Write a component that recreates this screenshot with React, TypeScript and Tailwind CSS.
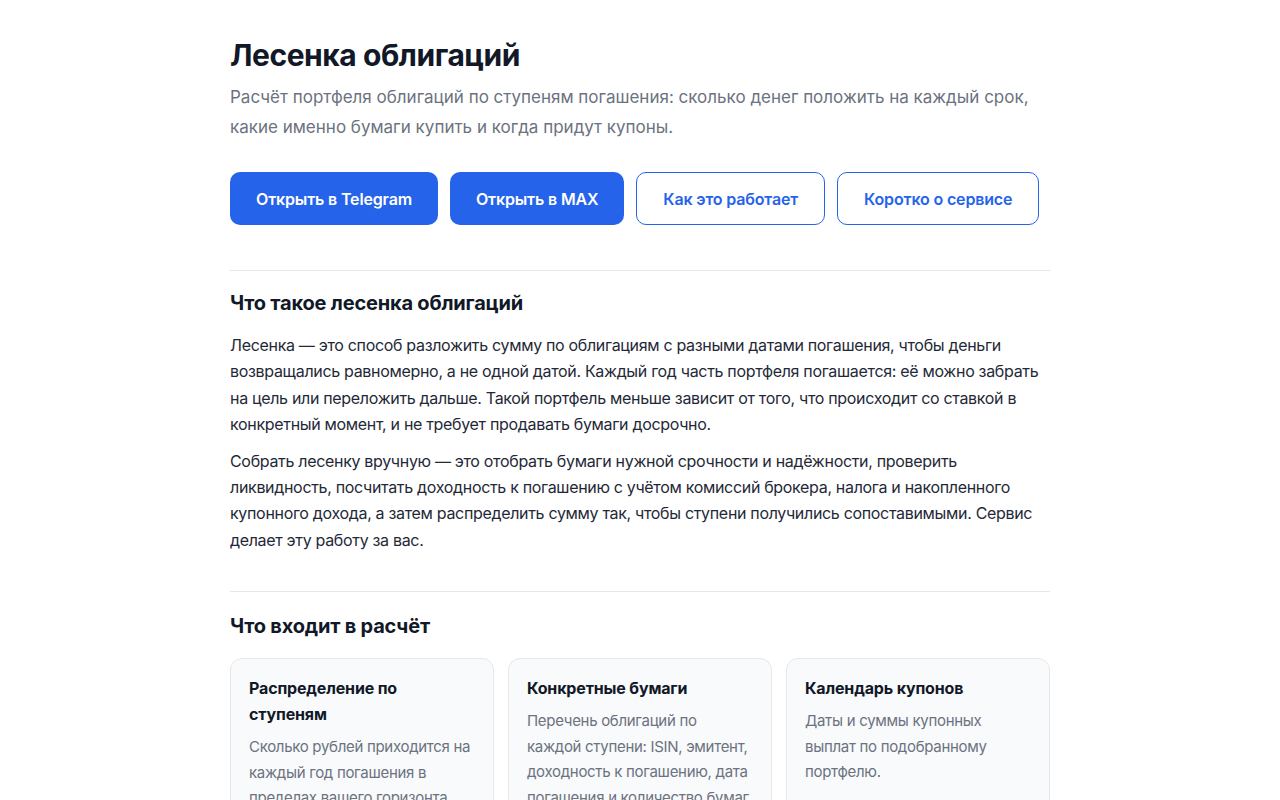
const cards = [
  {
    title: "Распределение по ступеням",
    text: "Сколько рублей приходится на каждый год погашения в пределах вашего горизонта.",
  },
  {
    title: "Конкретные бумаги",
    text: "Перечень облигаций по каждой ступени: ISIN, эмитент, доходность к погашению, дата погашения и количество бумаг.",
  },
  {
    title: "Календарь купонов",
    text: "Даты и суммы купонных выплат по подобранному портфелю.",
  },
];

export default function App() {
  return (
    <div className="min-h-screen bg-white font-['Inter','Noto_Sans',sans-serif] text-[#1f2937]">
      <main className="mx-auto w-[820px] pt-[37px] pb-16">
        <h1 className="text-[30px] font-bold leading-[36px] tracking-[-0.015em] text-[#111827]">
          Лесенка облигаций
        </h1>
        <p className="mt-[9px] text-[17px] leading-[30px] text-[#6b7280]">
          Расчёт портфеля облигаций по ступеням погашения: сколько денег положить на каждый срок,
          какие именно бумаги купить и когда придут купоны.
        </p>

        <div className="mt-[30px] flex gap-3">
          <a className="flex h-[53px] items-center rounded-[10px] bg-[#2563eb] px-[26px] text-[16px] font-semibold tracking-[-0.01em] text-white">
            Открыть в Telegram
          </a>
          <a className="flex h-[53px] items-center rounded-[10px] bg-[#2563eb] px-[26px] text-[16px] font-semibold tracking-[-0.01em] text-white">
            Открыть в MAX
          </a>
          <a className="flex h-[53px] items-center rounded-[10px] border border-[#2563eb] bg-white px-[26px] text-[16px] font-semibold tracking-[-0.01em] text-[#2563eb]">
            Как это работает
          </a>
          <a className="flex h-[53px] items-center rounded-[10px] border border-[#2563eb] bg-white px-[26px] text-[16px] font-semibold tracking-[-0.01em] text-[#2563eb]">
            Коротко о сервисе
          </a>
        </div>

        <hr className="mt-[45px] border-t border-[#e5e7eb]" />

        <section>
          <h2 className="mt-[18px] text-[20px] font-bold leading-[28px] tracking-[-0.01em] text-[#111827]">
            Что такое лесенка облигаций
          </h2>
          <p className="mt-[15px] text-[16px] leading-[26.4px] tracking-[-0.02em]">
            Лесенка — это способ разложить сумму по облигациям с разными датами погашения, чтобы деньги
            возвращались равномерно, а не одной датой. Каждый год часть портфеля погашается: её можно забрать
            на цель или переложить дальше. Такой портфель меньше зависит от того, что происходит со ставкой в
            конкретный момент, и не требует продавать бумаги досрочно.
          </p>
          <p className="mt-[10px] text-[16px] leading-[26.4px] tracking-[-0.02em]">
            Собрать лесенку вручную — это отобрать бумаги нужной срочности и надёжности, проверить
            ликвидность, посчитать доходность к погашению с учётом комиссий брокера, налога и накопленного
            купонного дохода, а затем распределить сумму так, чтобы ступени получились сопоставимыми. Сервис
            делает эту работу за вас.
          </p>
        </section>

        <hr className="mt-[38px] border-t border-[#e5e7eb]" />

        <section>
          <h2 className="mt-[20px] text-[20px] font-bold leading-[28px] tracking-[-0.01em] text-[#111827]">
            Что входит в расчёт
          </h2>
          <div className="mt-[18px] grid grid-cols-3 gap-[14px]">
            {cards.map((c) => (
              <div
                key={c.title}
                className="rounded-[12px] border border-[#e5e7eb] bg-[#f9fafb] px-[18px] pt-[16px] pb-[20px]"
              >
                <h3 className="text-[16px] font-bold leading-[26px] tracking-[-0.01em] text-[#111827]">
                  {c.title}
                </h3>
                <p className="mt-[7px] text-[15px] leading-[25.5px] tracking-[-0.02em] text-[#6b7280]">
                  {c.text}
                </p>
              </div>
            ))}
          </div>
        </section>
      </main>
    </div>
  );
}
